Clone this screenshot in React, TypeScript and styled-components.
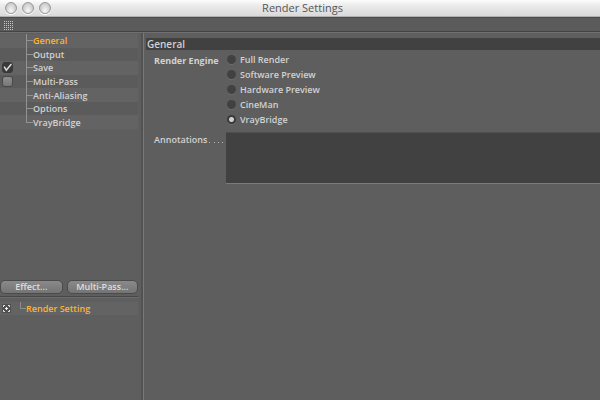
import React, { useState } from "react";
import styled, { createGlobalStyle } from "styled-components";

const GlobalStyle = createGlobalStyle`
  * { box-sizing: border-box; }
  body {
    margin: 0;
    background: #5e5e5e;
    color: #d2d2d2;
    font-family: "Open Sans", "Noto Sans", sans-serif;
    font-size: 9px;
    line-height: 13px;
  }
  button, input, textarea { font: inherit; color: inherit; margin: 0; }
`;

const Window = styled.div`
  display: flex;
  flex-direction: column;
  min-height: 100vh;
`;

const TitleBar = styled.header`
  display: grid;
  grid-template-columns: 1fr auto 1fr;
  align-items: center;
  height: 17px;
  padding: 0 0 0 5px;
  background: linear-gradient(#fdfdfd, #ebebeb 35%, #d9d9d9);
  border-bottom: 1px solid #b0b0b0;
`;

const Lights = styled.div`
  display: flex;
  gap: 5px;
`;

const Light = styled.button`
  width: 12px;
  height: 12px;
  padding: 0;
  border: 1px solid #9a9a9a;
  border-radius: 50%;
  background: radial-gradient(ellipse at 50% 80%, #f8f8f8, #cfcfcf 65%, #aaaaaa);
  box-shadow: 0 1px 0 #ffffff;
`;

const Title = styled.h1`
  margin: 0;
  font-size: 11px;
  line-height: 16px;
  font-weight: 400;
  color: #565656;
`;

const Toolbar = styled.div`
  height: 15px;
  padding: 3px 4px;
  background: #5b5b5b;
  border-top: 1px solid #4c4c4c;
  border-bottom: 1px solid #444444;
`;

const Grip = styled.svg`
  display: block;
`;

const Body = styled.div`
  display: flex;
  flex: 1;
  border-top: 1px solid #707070;
`;

const Sidebar = styled.aside`
  width: 144px;
  flex: none;
  display: flex;
  flex-direction: column;
  border-right: 1px solid #797979;
  box-shadow: inset -2px 0 0 #525252;
`;

const Tree = styled.ul`
  display: grid;
  grid-template-rows: repeat(7, 1fr);
  height: 95px;
  margin: 1px 5px 0 0;
  padding: 0;
  list-style: none;
`;

const TreeRow = styled.li<{ $light: boolean }>`
  display: flex;
  align-items: center;
  background: ${(p) => (p.$light ? "#636363" : "#5b5b5b")};
`;

const CheckCell = styled.span`
  display: flex;
  width: 26px;
  padding-left: 2px;
`;

const Branch = styled.span<{ $last: boolean }>`
  align-self: stretch;
  width: 7px;
  background:
    linear-gradient(#939393, #939393) 0 0 / 1px ${(p) => (p.$last ? "50%" : "100%")} no-repeat,
    linear-gradient(#939393, #939393) 0 50% / 100% 1px no-repeat;
`;

const TreeItem = styled.button<{ $active: boolean }>`
  padding: 0;
  border: 0;
  background: none;
  line-height: 13px;
  font-weight: 600;
  color: ${(p) => (p.$active ? "#ffb32e" : "#d2d2d2")};
`;

const Check = styled.input`
  appearance: none;
  width: 11px;
  height: 11px;
  border: 1px solid #484848;
  border-radius: 3px;
  background: linear-gradient(#8f8f8f, #777777);
  &:checked {
    border-color: #393939;
    background: url("data:image/svg+xml,%3Csvg xmlns='http://www.w3.org/2000/svg' viewBox='0 0 9 9'%3E%3Cpath d='M1.2 3.6L3.3 7.2L8.6 0.8' fill='none' stroke='%23ddd' stroke-width='1.5'/%3E%3C/svg%3E") #393939;
  }
`;

const Actions = styled.div`
  display: flex;
  gap: 4px;
  margin: 151px 5px 0 0;
  padding-bottom: 2px;
  border-bottom: 1px solid #464646;
`;

const ActionButton = styled.button<{ $grow: number }>`
  flex: ${(p) => p.$grow} 1 0;
  height: 14px;
  padding: 0;
  border: 1px solid #4b4b4b;
  border-radius: 5px;
  line-height: 12px;
  font-weight: 600;
  color: #dedede;
  background: linear-gradient(#8a8a8a, #747474);
`;

const Settings = styled.div`
  display: flex;
  align-items: center;
  height: 18px;
  padding-top: 4px;
  margin-right: 5px;
  border-top: 1px solid #6c6c6c;
  background: linear-gradient(#5e5e5e 4px, #636363 4px);
`;

const Target = styled.svg`
  flex: none;
  margin: 0 9px 0 2px;
`;

const Elbow = styled.span`
  width: 6px;
  height: 7px;
  align-self: flex-start;
  border-left: 1px solid #8c8c8c;
  border-bottom: 1px solid #8c8c8c;
`;

const Content = styled.main`
  flex: 1;
  min-width: 0;
  padding: 5px 0 0 2px;
`;

const SectionTitle = styled.h2`
  margin: 0;
  padding-left: 1px;
  font-size: 10px;
  line-height: 12px;
  font-weight: 600;
  background: #414141;
`;

const Field = styled.div`
  display: grid;
  grid-template-columns: 80px 1fr;
  align-items: start;
`;

const FieldLabel = styled.label<{ $strong?: boolean }>`
  display: flex;
  padding: ${(p) => (p.$strong ? "4px" : "1px")} 0 0 8px;
  font-weight: ${(p) => (p.$strong ? 700 : 600)};
  white-space: nowrap;
`;

const Leader = styled.span`
  flex: 1;
  display: flex;
  justify-content: space-between;
  align-items: flex-end;
  margin: 0 3px 3px 2px;
`;

const Dot = styled.i`
  width: 1px;
  height: 1px;
  background: #b4b4b4;
`;

const Options = styled.div`
  display: grid;
  grid-auto-rows: 15px;
  padding: 2px 0 5px 1px;
`;

const Option = styled.label`
  display: flex;
  align-items: center;
  gap: 4px;
  font-weight: 600;
`;

const Radio = styled.input`
  appearance: none;
  width: 9px;
  height: 9px;
  border-radius: 50%;
  background: #414141;
  box-shadow: 0 1px 0 #6d6d6d;
  &:checked {
    background: radial-gradient(circle, #d0d0d0 2px, #3a3a3a 3px);
  }
`;

const Notes = styled.textarea`
  display: block;
  width: 100%;
  height: 52px;
  resize: none;
  outline: 0;
  padding: 2px 4px;
  border: 0;
  border-top: 1px solid #4f4f4f;
  border-bottom: 1px solid #7b7b7b;
  border-radius: 0;
  background: #414141;
`;

const PAGES: { name: string; checked?: boolean }[] = [
  { name: "General" },
  { name: "Output" },
  { name: "Save", checked: true },
  { name: "Multi-Pass", checked: false },
  { name: "Anti-Aliasing" },
  { name: "Options" },
  { name: "VrayBridge" },
];

const ENGINES = ["Full Render", "Software Preview", "Hardware Preview", "CineMan", "VrayBridge"];

export default function App() {
  const [page, setPage] = useState("General");
  const [engine, setEngine] = useState("VrayBridge");

  return (
    <>
      <GlobalStyle />
      <Window>
        <TitleBar>
          <Lights>
            <Light aria-label="Close" />
            <Light aria-label="Minimize" />
            <Light aria-label="Zoom" />
          </Lights>
          <Title>Render Settings</Title>
        </TitleBar>
        <Toolbar>
          <Grip width="10" height="9" viewBox="0 0 10 9" aria-hidden="true">
            {[0, 2, 4, 6, 8].map((y) =>
              [0, 2, 4, 6, 8].map((x) => (
                <rect key={`${x}-${y}`} x={x} y={y} width="1" height="1" fill="#c4c4c4" />
              ))
            )}
          </Grip>
        </Toolbar>
        <Body>
          <Sidebar>
            <Tree>
              {PAGES.map((p, i) => (
                <TreeRow key={p.name} $light={i % 2 === 0}>
                  <CheckCell>
                    {p.checked !== undefined && (
                      <Check type="checkbox" aria-label={p.name} defaultChecked={p.checked} />
                    )}
                  </CheckCell>
                  <Branch $last={i === PAGES.length - 1} />
                  <TreeItem $active={page === p.name} onClick={() => setPage(p.name)}>
                    {p.name}
                  </TreeItem>
                </TreeRow>
              ))}
            </Tree>
            <Actions>
              <ActionButton $grow={63}>Effect...</ActionButton>
              <ActionButton $grow={72}>Multi-Pass...</ActionButton>
            </Actions>
            <Settings>
              <Target width="9" height="9" viewBox="0 0 9 9" aria-hidden="true">
                <rect width="9" height="9" fill="#505050" />
                <path
                  d="M1.5 3V1.5H3M6 1.5H7.5V3M7.5 6V7.5H6M3 7.5H1.5V6"
                  fill="none"
                  stroke="#e6e6e6"
                  strokeWidth="1"
                />
                <rect x="4" y="3" width="1" height="3" fill="#f2f2f2" />
                <rect x="3" y="4" width="3" height="1" fill="#f2f2f2" />
              </Target>
              <Elbow />
              <TreeItem $active>Render Setting</TreeItem>
            </Settings>
          </Sidebar>
          <Content>
            <SectionTitle>General</SectionTitle>
            <Field role="radiogroup" aria-labelledby="engine">
              <FieldLabel as="span" id="engine" $strong>
                Render Engine
              </FieldLabel>
              <Options>
                {ENGINES.map((name) => (
                  <Option key={name}>
                    <Radio
                      type="radio"
                      name="engine"
                      checked={engine === name}
                      onChange={() => setEngine(name)}
                    />
                    {name}
                  </Option>
                ))}
              </Options>
            </Field>
            <Field>
              <FieldLabel htmlFor="notes">
                Annotations
                <Leader aria-hidden="true">
                  <Dot />
                  <Dot />
                  <Dot />
                  <Dot />
                </Leader>
              </FieldLabel>
              <Notes id="notes" />
            </Field>
          </Content>
        </Body>
      </Window>
    </>
  );
}
